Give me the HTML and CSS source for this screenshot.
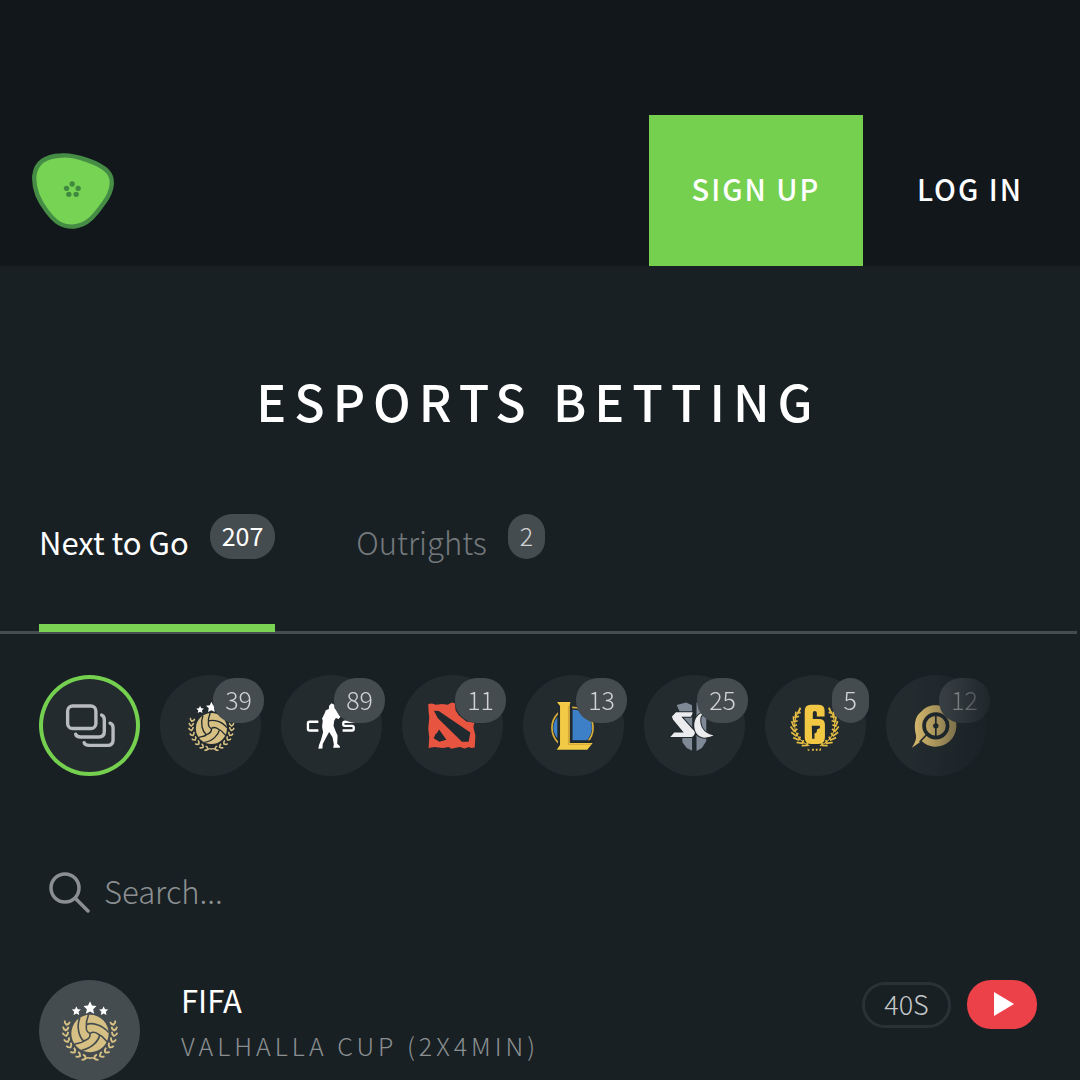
FILE: index.html
```
<!DOCTYPE html>
<html lang="en">
<head>
  <meta charset="utf-8">
  <meta name="viewport" content="width=device-width, initial-scale=1">
  <title>Esports Betting</title>
  <link rel="stylesheet" href="styles.css">
</head>
<body>
  <!-- shared icon shapes -->
  <svg class="defs" width="0" height="0" aria-hidden="true">
    <symbol id="leaf" viewBox="-4 -4 8 8">
      <path d="M-3.2 -2.6 Q-2.6 0.4 0 1.6 Q2.6 0.4 3.2 -2.6" fill="none" stroke="#d6c083" stroke-width="2.2"/>
    </symbol>
    <symbol id="star" viewBox="0 0 24 24">
      <path d="M12 0l3.600 7.800 8.400 1-6.200 5.800 1.700 8.400L12 18.800 4.500 23l1.700-8.400L0 8.800l8.400-1z" fill="#fff"/>
    </symbol>
    <symbol id="fifa" viewBox="0 0 100 100">
      <use href="#star" x="32.500" y="26" width="9" height="9"/>
      <use href="#star" x="44" y="21" width="13" height="13"/>
      <use href="#star" x="59.500" y="26" width="9" height="9"/>
      <g transform="translate(50.500 53)">
        <circle r="18.500" fill="#d6c083"/>
        <g fill="none" stroke="currentColor" stroke-width="1.600">
          <path d="M0 0C-5 -2 -3.500 -6 -3.500 -9C-4 -13 -2 -15 -1.500 -19M-3.500 -9C2 -11 12 -9 18.500 -1"/>
          <path transform="rotate(120)" d="M0 0C-5 -2 -3.500 -6 -3.500 -9C-4 -13 -2 -15 -1.500 -19M-3.500 -9C2 -11 12 -9 18.500 -1"/>
          <path transform="rotate(240)" d="M0 0C-5 -2 -3.500 -6 -3.500 -9C-4 -13 -2 -15 -1.500 -19M-3.500 -9C2 -11 12 -9 18.500 -1"/>
        </g>
      </g>
      <g id="laurel">
        <use href="#leaf" x="-3.500" y="-3.500" width="7" height="7" transform="translate(27.500 43) rotate(14)"/>
        <use href="#leaf" x="-3.500" y="-3.500" width="7" height="7" transform="translate(26.500 48.500)"/>
        <use href="#leaf" x="-3.500" y="-3.500" width="7" height="7" transform="translate(26.500 54) rotate(-10)"/>
        <use href="#leaf" x="-3.500" y="-3.500" width="7" height="7" transform="translate(28 60) rotate(-22)"/>
        <use href="#leaf" x="-3.500" y="-3.500" width="7" height="7" transform="translate(30.500 65.500) rotate(-34)"/>
        <use href="#leaf" x="-3.500" y="-3.500" width="7" height="7" transform="translate(34.500 70.500) rotate(-48)"/>
        <use href="#leaf" x="-3.500" y="-3.500" width="7" height="7" transform="translate(39.500 74.500) rotate(-60)"/>
        <use href="#leaf" x="-3.500" y="-3.500" width="7" height="7" transform="translate(45 77) rotate(-74)"/>
      </g>
      <use href="#laurel" transform="translate(101 0) scale(-1 1)"/>
      <path d="M44 79Q48 76 50.500 77.500Q53 76 57 79" fill="none" stroke="#d6c083" stroke-width="1.500"/>
    </symbol>
  </svg>

  <header class="header">
    <a href="#" class="logo" aria-label="Home">
      <svg viewBox="36 37 247 228">
        <path d="M125 44C165 41 240 66 264 92C284 114 279 150 254 185C229 220 205 255 163 258C125 260 106 245 81 212C56 180 40 145 43 105C47 65 75 46 125 44Z" fill="#77d353" stroke="#458c45" stroke-width="13"/>
        <g fill="#3f8940">
          <circle cx="157" cy="130" r="8"/>
          <circle cx="140" cy="143" r="8"/>
          <circle cx="175" cy="143" r="8"/>
          <circle cx="147" cy="161" r="8"/>
          <circle cx="169" cy="161" r="8"/>
        </g>
      </svg>
    </a>
    <nav class="account">
      <a href="#" class="account-link signup">SIGN UP</a>
      <a href="#" class="account-link">LOG IN</a>
    </nav>
  </header>

  <main>
    <h1>ESPORTS BETTING</h1>

    <div class="tabs">
      <button class="tab active" type="button">
        <span class="tab-label">Next to Go</span>
        <span class="badge">207</span>
      </button>
      <button class="tab" type="button">
        <span class="tab-label">Outrights</span>
        <span class="badge">2</span>
      </button>
    </div>

    <div class="filters">
      <button class="filter active" type="button" aria-label="All games">
        <svg viewBox="27 30 300 300" fill="none" stroke="#b9bcbe" stroke-width="10" stroke-linecap="round">
          <rect x="112" y="122" width="84" height="67" rx="15"/>
          <path d="M213 149Q221 152 221 163V198Q221 214 205 214H151Q138 214 136 206"/>
          <path d="M238 173Q247 176 247 187V222Q247 239 231 239H177Q163 239 161 231"/>
        </svg>
      </button>
      <button class="filter" type="button" aria-label="FIFA">
        <svg class="small" viewBox="0 0 100 100"><use href="#fifa"/></svg>
        <span class="badge">39</span>
      </button>
      <button class="filter" type="button" aria-label="Counter-Strike">
        <svg viewBox="36 30 300 300">
          <path d="M147 169H121Q116 169 116 174V190Q116 195 121 195H147M254 169H226Q221 169 221 174V177Q221 181 226 181H247Q252 181 252 186V190Q252 195 247 195H219" fill="none" stroke="#fff" stroke-width="7"/>
          <path d="M179 121L186 114L194 118L195 129L204 136L208 149L213 154L207 161L199 158L194 166L192 181L197 194L204 210L203 234L211 242V246H191L193 236L189 215L179 199L170 216L160 235L159 248L147 249L149 238L155 222L161 200L158 184L160 166L158 159L165 145L169 135L178 131Z" fill="#fff"/>
        </svg>
        <span class="badge">89</span>
      </button>
      <button class="filter" type="button" aria-label="Dota 2">
        <svg viewBox="399 30 300 300">
          <path d="M477 116L488 115L500 118L518 116L535 118L546 112L556 114L558 135L568 150L590 168L614 172L611 184L613 193L617 210L615 245L605 247L598 244L585 248L570 244L556 247L545 249L538 244L520 247L495 244L478 247L480 216L477 190L480 155L478 140Z" fill="#e75440"/>
          <path d="M494 136L508 137L602 201L597 228H577L505 158ZM509 192L531 222L510 228L493 218L499 205L503 202Z" fill="#20292d"/>
        </svg>
        <span class="badge">11</span>
      </button>
      <button class="filter" type="button" aria-label="League of Legends">
        <svg viewBox="42 30 300 300">
          <circle cx="189" cy="187" r="61" fill="#20292d" stroke="#d9ad3a" stroke-width="5"/>
          <path d="M189 133A54 54 0 0 1 236 219L230 225H189ZM144 155V218Q120 188 144 155Z" fill="#3e80c8"/>
          <path d="M142 110H188V224H258L235 256H138L146 238V125Z" fill="#20292d"/>
          <path d="M143 110H183L181 118V232H249L233 252H142L152 238V122Z" fill="#f2ca45"/>
          <path d="M177 122V236H244" fill="none" stroke="#d5a438" stroke-width="3"/>
        </svg>
        <span class="badge">13</span>
      </button>
      <button class="filter" type="button" aria-label="StarCraft">
        <svg viewBox="405 30 300 300">
          <path d="M502 119L530 112L548 120V255L532 247L519 230V180L516 150ZM561 112L578 120L590 145V226L577 247L561 256Z" fill="#7f8996"/>
          <path d="M500 141H552L544 154H516L550 192L557 198Q555 213 546 214H483L495 201H523L491 162L488 153Z" fill="#ececee" stroke="#20292d" stroke-width="6" paint-order="stroke"/>
          <path d="M582 141C550 150 549 190 563 206Q573 217 589 216Q602 215 612 209C582 206 568 180 573 155Z" fill="#ececee" stroke="#20292d" stroke-width="6" paint-order="stroke"/>
          <path d="M554 112V150M554 215V257" stroke="#20292d" stroke-width="10"/>
        </svg>
        <span class="badge">25</span>
      </button>
      <button class="filter" type="button" aria-label="Rainbow Six">
        <svg viewBox="48 30 300 300">
          <path d="M184 118H208Q225 118 225 136V153H202V143Q202 137 196 137Q190 137 190 143V161H207Q226 161 226 177V215Q226 235 207 235H184Q166 235 166 216V136Q166 118 184 118Z" fill="#f2c744"/>
          <path d="M187 181H211V188L203 191L201 201L195 204V219H188Z" fill="#20292d"/>
          <g id="wreath" fill="none" stroke="#e5bd43" stroke-width="5">
            <path d="M154 130Q137 148 136 180Q138 222 180 240" stroke-width="3"/>
            <path d="M153 127L146 143L154 141M140 139L138 155L149 153M132 153L134 169L145 166M127 167L133 182L143 178M124 183L135 197L144 190M126 200L140 211L147 202M132 216L148 223L153 213M142 230L160 233L162 223M157 240L173 239L174 231"/>
          </g>
          <use href="#wreath" transform="translate(391 0) scale(-1 1)"/>
          <path d="M175 247l3 5 3 -1-2 4h-4zM188 249h5v6h-5zM199 249h5v6h-5zM211 247l4 3-2 5h-4z" fill="#f2c744"/>
        </svg>
        <span class="badge">5</span>
      </button>
      <button class="filter" type="button" aria-label="Call of Duty">
        <svg viewBox="411 30 300 300">
          <path d="M517 138C535 119 552 119 571 121L575 125C603 129 622 153 620 184C617 222 588 245 554 243Q532 241 517 226L488 246Q503 222 500 208C494 185 494 154 517 138Z" fill="#d3b66c"/>
          <circle cx="559" cy="181" r="35" fill="#d3b66c" stroke="#20292d" stroke-width="11"/>
          <path d="M533 206L511 229M559 149V213" stroke="#20292d" stroke-width="5"/>
          <circle cx="559" cy="181" r="8" fill="#20292d"/>
        </svg>
        <span class="badge">12</span>
      </button>
    </div>

    <form class="search">
      <label for="search" aria-label="Search">
        <svg viewBox="0 0 41 41" fill="none" stroke="#8b8f91" stroke-width="3.500" stroke-linecap="round">
          <circle cx="16" cy="16" r="14"/>
          <path d="M26.500 26.500L39 39"/>
        </svg>
      </label>
      <input type="text" id="search" placeholder="Search...">
    </form>

    <a href="#" class="event">
      <span class="event-icon">
        <svg viewBox="0 0 100 100"><use href="#fifa"/></svg>
      </span>
      <span class="event-info">
        <span class="event-game">FIFA</span>
        <span class="event-league">VALHALLA CUP (2X4MIN)</span>
      </span>
      <span class="countdown">40S</span>
      <span class="live">
        <svg viewBox="0 0 20 24"><path d="M0 0L20 12L0 24Z" fill="#fff"/></svg>
      </span>
    </a>
  </main>
</body>
</html>
```
FILE: styles.css
```
* {
  box-sizing: border-box;
}
body {
  margin: 0;
  background: #182024;
  color: #fff;
  font-family: "Noto Sans CJK SC", "Noto Sans", sans-serif;
  font-weight: 300;
  overflow-x: hidden;
}
a {
  color: inherit;
  text-decoration: none;
}
button {
  font: inherit;
  color: inherit;
  background: none;
  border: 0;
  padding: 0;
  cursor: pointer;
}
svg {
  display: block;
}
.defs {
  position: absolute;
}

/* header */
.header {
  display: flex;
  justify-content: space-between;
  align-items: center;
  padding: 115px 3px 0 32px;
  background: #12171b;
}
.logo svg {
  width: 82px;
  height: 76px;
}
.account {
  display: flex;
}
.account-link {
  min-width: 214px;
  height: 151px;
  line-height: 146px;
  text-align: center;
  font-size: 29px;
  font-weight: 500;
  letter-spacing: 2px;
}
.signup {
  background: #75d04f;
}

h1 {
  margin: 0 3px 0 0;
  padding: 104px 0 84px;
  text-align: center;
  font-size: 50px;
  line-height: 60px;
  font-weight: 500;
  letter-spacing: 8px;
}

/* tabs */
.tabs {
  display: flex;
  gap: 81px;
  margin-right: 3px;
  padding-left: 39px;
  border-bottom: 3px solid #454c50;
}
.tab {
  display: flex;
  align-items: flex-start;
  gap: 21px;
  margin-bottom: -1px;
  padding-bottom: 62px;
  border-bottom: 8px solid transparent;
}
.tab.active {
  border-color: #7ad353;
  font-weight: 400;
}
.tab-label {
  padding-top: 8px;
  font-size: 31px;
  line-height: 40px;
  color: #74797c;
}
.tab.active .tab-label {
  color: #fff;
}
.badge {
  min-width: 37px;
  height: 45px;
  padding: 0 12px;
  border-radius: 22px;
  background: #454c50;
  font-size: 25px;
  line-height: 42px;
  text-align: center;
  color: #d0d2d3;
}
.tab.active .badge {
  color: #fff;
}

/* game filters */
.filters {
  display: flex;
  gap: 20px;
  margin-top: 41px;
  padding-left: 39px;
  -webkit-mask-image: linear-gradient(to left, transparent 75px, #000 165px);
  mask-image: linear-gradient(to left, transparent 75px, #000 165px);
}
.filter {
  position: relative;
  display: flex;
  align-items: center;
  justify-content: center;
  flex: none;
  width: 101px;
  height: 101px;
  border-radius: 50%;
  background: #232b2f;
  color: #232b2f;
}
.filter.active {
  box-shadow: inset 0 0 0 4px #75d04f;
}
.filter svg {
  width: 101px;
  height: 101px;
}
.filter svg.small {
  width: 84px;
  height: 84px;
}
.filter .badge {
  position: absolute;
  top: 3px;
  right: -3px;
}

/* search */
.search {
  display: flex;
  align-items: center;
  gap: 14px;
  margin: 92px 39px 64px 49px;
}
.search svg {
  width: 41px;
  height: 41px;
}
.search input {
  flex: 1;
  height: 48px;
  padding: 0 0 4px;
  border: 0;
  outline: 0;
  background: none;
  color: #fff;
  font: inherit;
  font-size: 31px;
}
.search input::placeholder {
  color: #8b8f91;
  opacity: 1;
}

/* event list */
.event {
  display: flex;
  align-items: flex-start;
  padding: 0 43px 0 39px;
}
.event-icon {
  width: 101px;
  height: 101px;
  margin-right: 41px;
  border-radius: 50%;
  background: #454c50;
  color: #454c50;
}
.event-info {
  display: flex;
  flex-direction: column;
  flex: 1;
}
.event-game {
  font-size: 31px;
  line-height: 40px;
  font-weight: 400;
}
.event-league {
  font-size: 25px;
  line-height: 50px;
  letter-spacing: 4px;
  color: #8b8f91;
}
.countdown {
  width: 89px;
  height: 46px;
  margin: 2px 16px 0 0;
  border: 3px solid #2a3236;
  border-radius: 23px;
  text-align: center;
  font-size: 27px;
  line-height: 37px;
  color: #c5c8c9;
}
.live {
  display: flex;
  align-items: center;
  justify-content: center;
  width: 70px;
  height: 49px;
  padding: 0 0 2px 4px;
  border-radius: 24px;
  background: #ec4149;
}
.live svg {
  width: 20px;
  height: 24px;
}
```
